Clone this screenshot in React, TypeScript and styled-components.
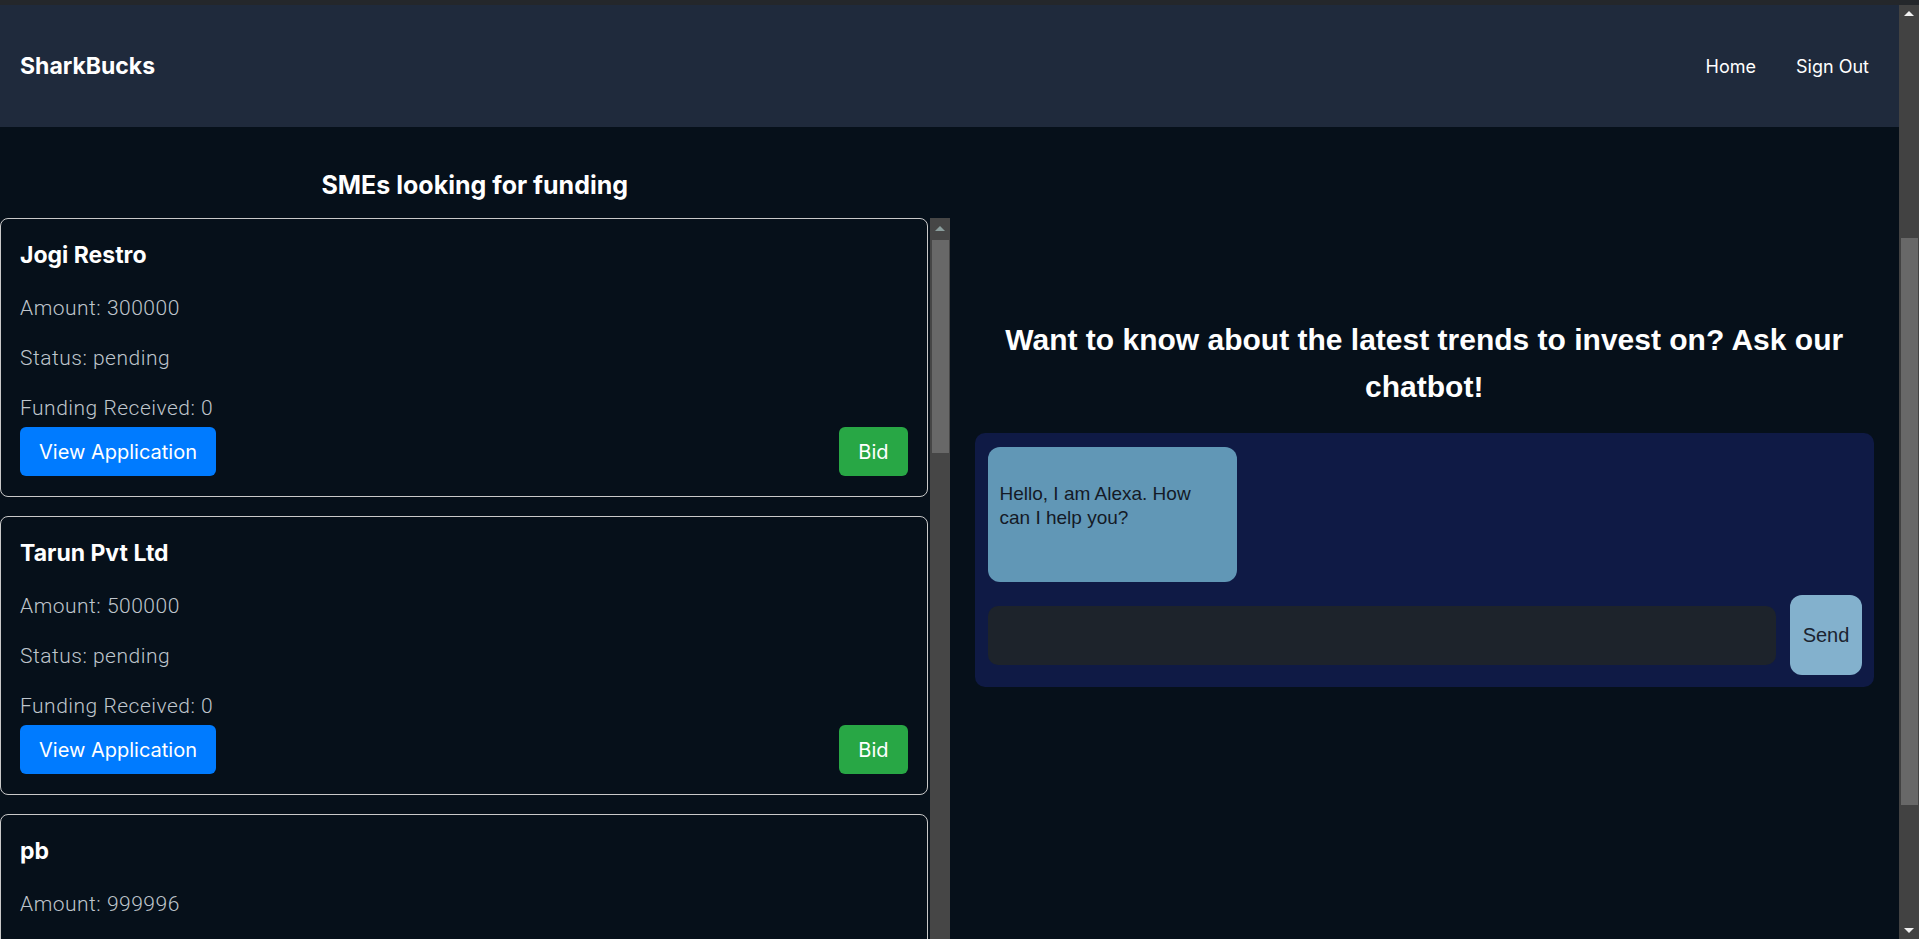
import React from "react";
import styled, { createGlobalStyle } from "styled-components";

const GlobalStyle = createGlobalStyle`
  html, body {
    margin: 0;
    padding: 0;
    height: 100%;
    overflow: hidden;
    background: #06101a;
  }
  #root {
    height: 100%;
  }
  * {
    box-sizing: border-box;
  }
`;

/* ---------- browser frame & scroll rails ---------- */

const Shell = styled.div`
  display: flex;
  flex-direction: column;
  height: 100%;
`;

const TopStrip = styled.div`
  height: 5px;
  flex: 0 0 5px;
  background: #24272b;
`;

const Viewport = styled.div`
  flex: 1;
  min-height: 0;
  display: flex;
`;

const Scroller = styled.div`
  flex: 1;
  min-width: 0;
  overflow-y: auto;
  scrollbar-width: none;
  background: #06101a;
`;

const Rail = styled.div<{ $track: string; $width: number }>`
  flex: 0 0 ${(p) => p.$width}px;
  width: ${(p) => p.$width}px;
  display: flex;
  flex-direction: column;
  background: ${(p) => p.$track};
`;

const RailButton = styled.div<{ $height: number }>`
  flex: 0 0 ${(p) => p.$height}px;
  display: flex;
  align-items: center;
  justify-content: center;
`;

const Arrow = styled.span<{ $dir: "up" | "down"; $color: string }>`
  width: 0;
  height: 0;
  border-left: 5px solid transparent;
  border-right: 5px solid transparent;
  ${(p) =>
    p.$dir === "up"
      ? `border-bottom: 5px solid ${p.$color};`
      : `border-top: 5px solid ${p.$color};`}
`;

const RailTrack = styled.div<{ $offset: number }>`
  flex: 1;
  min-height: 0;
  padding: ${(p) => p.$offset}px 1px 0 2px;
`;

const RailThumb = styled.div<{ $size: number }>`
  height: ${(p) => p.$size}px;
  background: #686868;
`;

function ScrollRail({
  track,
  arrow,
  button,
  offset,
  size,
}: {
  track: string;
  arrow: string;
  button: number;
  offset: number;
  size: number;
}) {
  return (
    <Rail $track={track} $width={20} aria-hidden>
      <RailButton $height={button}>
        <Arrow $dir="up" $color={arrow} />
      </RailButton>
      <RailTrack $offset={offset}>
        <RailThumb $size={size} />
      </RailTrack>
      <RailButton $height={button}>
        <Arrow $dir="down" $color={arrow} />
      </RailButton>
    </Rail>
  );
}

/* ---------- header ---------- */

const Header = styled.header`
  height: 122px;
  background: #1f2a3c;
  display: flex;
  align-items: center;
  justify-content: space-between;
  padding: 0 30px 0 20px;
  font-family: Inter, "Noto Sans", sans-serif;
  color: #ffffff;
`;

const Brand = styled.div`
  font-size: 23px;
  font-weight: 700;
`;

const Nav = styled.nav`
  display: flex;
  align-items: center;
  gap: 40px;
`;

const NavLink = styled.a`
  color: #ffffff;
  font-size: 18px;
  font-weight: 400;
  text-decoration: none;
  cursor: pointer;
`;

/* ---------- main ---------- */

const Main = styled.main`
  display: grid;
  grid-template-columns: 1fr 1fr;
  align-items: start;
`;

const LeftColumn = styled.section`
  display: flex;
  flex-direction: column;
  min-width: 0;
`;

const SectionTitle = styled.h2`
  margin: 44px 0 18px;
  text-align: center;
  font-family: Inter, "Noto Sans", sans-serif;
  font-size: 25px;
  line-height: 29px;
  font-weight: 700;
  color: #ffffff;
`;

const ListFrame = styled.div`
  display: flex;
  height: 800px;
`;

const CardList = styled.div`
  flex: 1;
  min-width: 0;
  overflow-y: auto;
  scrollbar-width: none;
`;

const Card = styled.article`
  border: 1px solid #c9c9c9;
  border-radius: 8px;
  padding: 22px 19px 20px;
  margin: 0 2px 19px 0;
  background: #06101a;
`;

const CardTitle = styled.h3`
  margin: 0 0 27px;
  font-family: Inter, "Noto Sans", sans-serif;
  font-size: 23px;
  line-height: 28px;
  font-weight: 700;
  color: #ffffff;
`;

const Info = styled.p<{ $last?: boolean }>`
  margin: 0 0 ${(p) => (p.$last ? "7px" : "26px")};
  font-family: Roboto, "Noto Sans", sans-serif;
  font-weight: 300;
  font-size: 21px;
  letter-spacing: 0.5px;
  line-height: 24px;
  color: #bfc5cc;
`;

const Actions = styled.div`
  display: flex;
  justify-content: space-between;
  align-items: center;
`;

const ActionButton = styled.button<{ $variant: "primary" | "success" }>`
  height: 49px;
  padding: 0 19px;
  border: none;
  border-radius: 6px;
  font-family: Inter, "Noto Sans", sans-serif;
  font-size: 20px;
  font-weight: 400;
  color: #ffffff;
  cursor: pointer;
  background: ${(p) => (p.$variant === "primary" ? "#007bff" : "#28a745")};
`;

const RightColumn = styled.section`
  padding: 0 25px;
  display: flex;
  flex-direction: column;
  min-width: 0;
`;

const ChatHeading = styled.h2`
  margin: 189px 0 23px;
  text-align: center;
  font-family: "Liberation Sans", Arial, sans-serif;
  font-size: 30px;
  line-height: 47px;
  font-weight: 700;
  color: #ffffff;
`;

const ChatBox = styled.div`
  background: #0f1a45;
  border-radius: 10px;
  padding: 14px 12px 12px 13px;
  display: flex;
  flex-direction: column;
  gap: 13px;
`;

const Bubble = styled.div`
  width: 249px;
  border-radius: 12px;
  background: #6197b6;
  padding: 35px 20px 52px 12px;
  font-family: "Liberation Sans", Arial, sans-serif;
  font-size: 19px;
  line-height: 24px;
  color: #141a26;
`;

const InputRow = styled.div`
  display: flex;
  align-items: center;
  gap: 14px;
`;

const ChatInput = styled.input`
  flex: 1;
  height: 59px;
  border: none;
  outline: none;
  border-radius: 10px;
  background: #1d232b;
  padding: 0 16px;
  font-family: "Liberation Sans", Arial, sans-serif;
  font-size: 17px;
  color: #ffffff;
`;

const SendButton = styled.button`
  width: 72px;
  height: 80px;
  border: none;
  border-radius: 12px;
  background: #83b1cd;
  font-family: "Liberation Sans", Arial, sans-serif;
  font-size: 20px;
  color: #1b2430;
  cursor: pointer;
`;

type Sme = {
  name: string;
  amount: number;
  status: string;
  funding: number;
};

const smes: Sme[] = [
  { name: "Jogi Restro", amount: 300000, status: "pending", funding: 0 },
  { name: "Tarun Pvt Ltd", amount: 500000, status: "pending", funding: 0 },
  { name: "pb", amount: 999996, status: "pending", funding: 0 },
];

function SmeCard({ sme }: { sme: Sme }) {
  return (
    <Card>
      <CardTitle>{sme.name}</CardTitle>
      <Info>Amount: {sme.amount}</Info>
      <Info>Status: {sme.status}</Info>
      <Info $last>Funding Received: {sme.funding}</Info>
      <Actions>
        <ActionButton $variant="primary">View Application</ActionButton>
        <ActionButton $variant="success">Bid</ActionButton>
      </Actions>
    </Card>
  );
}

export default function App() {
  return (
    <>
      <GlobalStyle />
      <Shell>
        <TopStrip />
        <Viewport>
          <Scroller>
            <Header>
              <Brand>SharkBucks</Brand>
              <Nav>
                <NavLink>Home</NavLink>
                <NavLink>Sign Out</NavLink>
              </Nav>
            </Header>
            <Main>
              <LeftColumn>
                <SectionTitle>SMEs looking for funding</SectionTitle>
                <ListFrame>
                  <CardList>
                    {smes.map((s) => (
                      <SmeCard key={s.name} sme={s} />
                    ))}
                  </CardList>
                  <ScrollRail track="#464646" arrow="#8a9d9c" button={20} offset={2} size={213} />
                </ListFrame>
              </LeftColumn>
              <RightColumn>
                <ChatHeading>
                  Want to know about the latest trends to invest on? Ask our chatbot!
                </ChatHeading>
                <ChatBox>
                  <Bubble>Hello, I am Alexa. How can I help you?</Bubble>
                  <InputRow>
                    <ChatInput type="text" />
                    <SendButton>Send</SendButton>
                  </InputRow>
                </ChatBox>
              </RightColumn>
            </Main>
          </Scroller>
          <ScrollRail track="#424242" arrow="#f0f0f0" button={17} offset={216} size={567} />
        </Viewport>
      </Shell>
    </>
  );
}
